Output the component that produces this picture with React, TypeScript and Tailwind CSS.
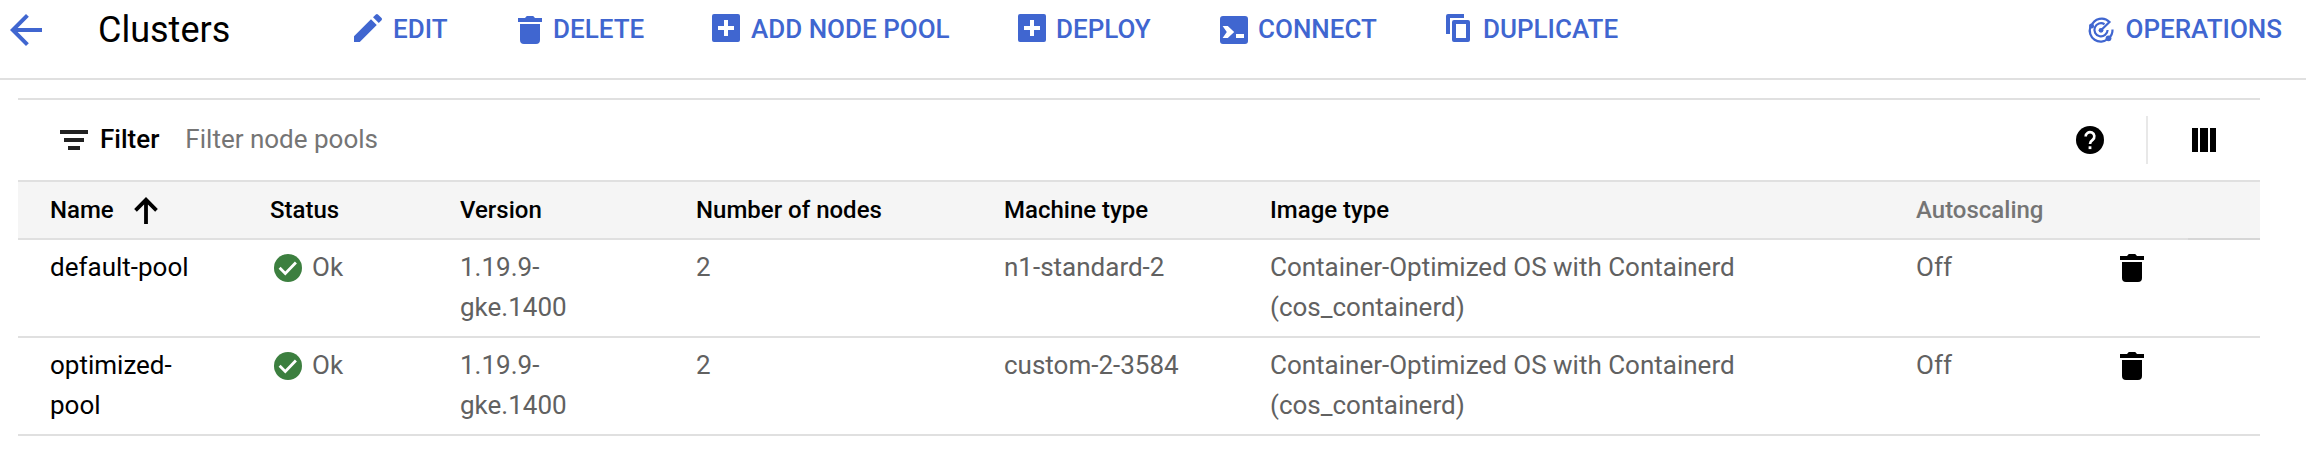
import React from "react";

type IconProps = { className?: string; children: React.ReactNode };

const Icon = ({ className = "", children }: IconProps) => (
  <svg viewBox="0 0 18 18" fill="currentColor" className={`block shrink-0 ${className}`}>
    {children}
  </svg>
);

const Trash = ({ className }: { className?: string }) => (
  <Icon className={className}>
    <path d="M4 14a2 2 0 0 0 2 2h6a2 2 0 0 0 2-2V6H4zM15 3h-3.500l-.9-1H7.400l-.9 1H3v2h12z" />
  </Icon>
);

const PlusBox = ({ className }: { className?: string }) => (
  <Icon className={className}>
    <path
      fillRule="evenodd"
      d="M3 2h12a1 1 0 0 1 1 1v12a1 1 0 0 1-1 1H3a1 1 0 0 1-1-1V3a1 1 0 0 1 1-1zM8 5v3H5v2h3v3h2v-3h3V8h-3V5z"
    />
  </Icon>
);

const Pencil = ({ className }: { className?: string }) => (
  <Icon className={className}>
    <path d="M2 13.120V16h2.880l8.500-8.500-2.880-2.880zM15.780 5.090a.76.76 0 0 0 0-1.080l-1.790-1.790a.76.76 0 0 0-1.080 0l-1.400 1.400 2.870 2.870z" />
  </Icon>
);

const Terminal = ({ className }: { className?: string }) => (
  <Icon className={className}>
    <path
      fillRule="evenodd"
      d="M3.500 2h11A1.500 1.500 0 0 1 16 3.500v11a1.500 1.500 0 0 1-1.500 1.500h-11A1.500 1.500 0 0 1 2 14.500v-11A1.500 1.500 0 0 1 3.500 2zM3.300 7 5.400 10 3.300 13H5.900L9.100 10 5.900 7zM10 11v2h4v-2z"
    />
  </Icon>
);

const Copy = ({ className }: { className?: string }) => (
  <Icon className={className}>
    <path
      fillRule="evenodd"
      d="M11 2H3a1 1 0 0 0-1 1v9h2V4h7zM6 5h7a1 1 0 0 1 1 1v9a1 1 0 0 1-1 1H6a1 1 0 0 1-1-1V6a1 1 0 0 1 1-1zM7 7v7h5V7z"
    />
  </Icon>
);

const Operations = ({ className }: { className?: string }) => (
  <svg
    viewBox="0 0 24 24"
    fill="none"
    stroke="currentColor"
    strokeWidth="2.200"
    className={`block shrink-0 overflow-visible ${className}`}
  >
    <path d="M2.500 8A10.700 10.700 0 0 1 20.500 4L12 12.300" />
    <path d="M1.300 9A11 11 0 0 0 19 20.800M23.500 11.500A11 11 0 0 1 20 20" />
    <path d="M15.500 6.200A6.600 6.600 0 1 0 18.600 12" />
    <circle cx="12" cy="12.300" r="2.400" fill="currentColor" stroke="none" />
    <circle cx="2.500" cy="8" r="2.500" fill="currentColor" stroke="none" />
    <circle cx="19.500" cy="20.300" r="2.900" fill="currentColor" stroke="none" />
  </svg>
);

const CheckBadge = () => (
  <svg viewBox="0 0 28 28" className="block size-7 shrink-0">
    <circle cx="14" cy="14" r="14" fill="#3c7f3f" />
    <path d="M5.600 13.700 11.300 19.400 21.900 8.600" fill="none" stroke="#fff" strokeWidth="2.800" />
  </svg>
);

type Action = { label: string; icon: React.ReactNode; box: string };

const actions: Action[] = [
  { label: "EDIT", icon: <Pencil className="size-9" />, box: "w-[162px] gap-[7px]" },
  { label: "DELETE", icon: <Trash className="mt-[2px] size-9" />, box: "w-[196px] gap-[5px]" },
  { label: "ADD NODE POOL", icon: <PlusBox className="size-9" />, box: "w-[306px] gap-[7px]" },
  { label: "DEPLOY", icon: <PlusBox className="size-9" />, box: "w-[202px] gap-[6px]" },
  { label: "CONNECT", icon: <Terminal className="mt-[2px] size-9" />, box: "w-[226px] gap-[6px]" },
  { label: "DUPLICATE", icon: <Copy className="size-9" />, box: "w-[200px] gap-[5px]" },
];

const pools = [
  { name: ["default-pool"], machine: "n1-standard-2" },
  { name: ["optimized-", "pool"], machine: "custom-2-3584" },
];

const columns = "grid grid-cols-[220px_190px_236px_308px_266px_646px_198px_146px] pl-8";

export default function App() {
  return (
    <div className="h-[470px] w-[2306px] overflow-hidden bg-white font-['Roboto',sans-serif] text-[26px] text-black">
      <header className="flex h-20 items-start border-b-2 border-[#e0e0e0] text-[#4066d0]">
        <svg viewBox="0 0 16 16" fill="currentColor" className="ml-[10px] mt-[14px] block size-8 shrink-0">
          <path d="M16 7H3.830l5.590-5.590L8 0 0 8l8 8 1.410-1.410L3.830 9H16z" />
        </svg>
        <h1 className="ml-14 mt-[10px] w-[252px] text-[36px] leading-10 text-black">Clusters</h1>
        <nav className="flex pt-[10px] font-medium leading-[38px]">
          {actions.map((a) => (
            <button key={a.label} className={`flex items-start whitespace-nowrap ${a.box}`}>
              {a.icon}
              <span>{a.label}</span>
            </button>
          ))}
        </nav>
        <button className="ml-auto mr-6 flex pt-[10px] font-medium leading-[38px]">
          <Operations className="mr-3 mt-2 size-6" />
          OPERATIONS
        </button>
      </header>

      <main className="ml-[18px] mt-[18px] w-[2242px] border-t-2 border-[#e0e0e0]">
        <div className="flex h-20 items-center pl-[42px] leading-[38px]">
          <svg viewBox="0 0 28 20" className="block h-5 w-7" fill="#212121">
            <path d="M0 0h28v4H0zM4 8h20v4H4zM8 16h12v4H8z" />
          </svg>
          <span className="mb-[2px] ml-3 font-medium">Filter</span>
          <span className="mb-[2px] ml-[26px] text-[#757575]">Filter node pools</span>
          <svg viewBox="0 0 20 20" className="ml-auto block size-7">
            <circle cx="10" cy="10" r="10" />
            <path
              d="M6.900 7.500a3.100 3.100 0 1 1 5 2.400c-1.200.9-1.900 1.400-1.900 2.900"
              fill="none"
              stroke="#fff"
              strokeWidth="1.900"
            />
            <path d="M9 14.500h2v2H9z" fill="#fff" />
          </svg>
          <div className="ml-[42px] h-12 w-[2px] bg-[#e8e8e8]" />
          <svg viewBox="0 0 24 24" className="ml-11 mr-11 block size-6">
            <path d="M0 0h6v24H0zM8 0h8v24H8zM18 0h6v24h-6z" />
          </svg>
        </div>

        <div
          className={`${columns} h-[60px] items-center border-y-2 border-[#e0e0e0] bg-[#f5f5f5] text-[24px] font-medium`}
        >
          <div className="flex items-center">
            Name
            <svg viewBox="0 0 24 28" className="ml-5 block h-7 w-6">
              <path d="M12 28V4M1.500 14.300 12 3.800 22.500 14.300" fill="none" stroke="#000" strokeWidth="3.800" />
            </svg>
          </div>
          <div>Status</div>
          <div>Version</div>
          <div>Number of nodes</div>
          <div>Machine type</div>
          <div>Image type</div>
          <div className="text-[#757575]">Autoscaling</div>
          <div className="-mb-[2px] ml-[74px] h-[2px] self-end bg-[#d6d6d6]" />
        </div>

        {pools.map((p) => (
          <div
            key={p.machine}
            className={`${columns} h-[98px] border-b-2 border-[#e0e0e0] pt-[7px] leading-10 text-[#616161]`}
          >
            <div className="text-black">
              {p.name.map((n) => (
                <div key={n}>{n}</div>
              ))}
            </div>
            <div className="flex items-start gap-[10px] pl-1">
              <div className="pt-[7px]">
                <CheckBadge />
              </div>
              Ok
            </div>
            <div>
              1.19.9-
              <br />
              gke.1400
            </div>
            <div>2</div>
            <div>{p.machine}</div>
            <div>
              Container-Optimized OS with Containerd
              <br />
              (cos_containerd)
            </div>
            <div>Off</div>
            <div>
              <Trash className="mt-[3px] size-9 text-black" />
            </div>
          </div>
        ))}
      </main>
    </div>
  );
}
